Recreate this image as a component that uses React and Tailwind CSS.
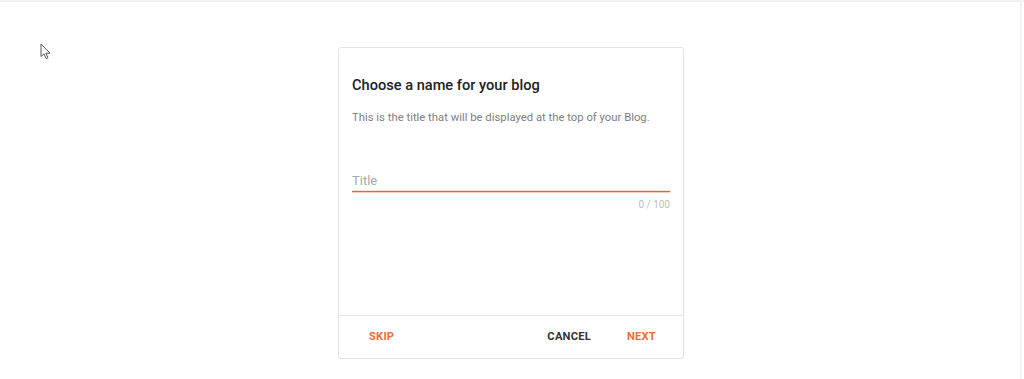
import React from "react";

export default function App() {
  return (
    <div className="relative h-[379px] w-[1024px] overflow-hidden bg-white" style={{ fontFamily: "Roboto, 'Liberation Sans', sans-serif" }}>
      <div className="absolute left-0 top-0 h-[2px] w-full bg-[#f1f1f1]" />
      <div className="absolute right-[2px] top-0 h-full w-[2px] bg-[#f3f3f3]" />
      <svg className="absolute left-[40px] top-[43px]" width="12" height="17" viewBox="0 0 12 17">
        <path d="M1 1 L1 13.5 L4 10.8 L6.2 15.6 L8 14.8 L5.9 10.2 L10 10.2 Z" fill="white" stroke="#555" strokeWidth="1" strokeLinejoin="round" />
      </svg>
      <div className="flex w-full justify-center pt-[47px]">
        <div className="ml-[-2px] flex h-[312px] w-[346px] flex-col rounded-[3px] border border-[#e2e2e2] bg-white">
          <div className="flex flex-1 flex-col px-[13px] pt-[27px]">
            <h1 className="text-[14.6px] font-medium leading-[20px] text-[#212121]">Choose a name for your blog</h1>
            <p className="mt-[15px] text-[11.3px] leading-[16px] text-[#808080]">This is the title that will be displayed at the top of your Blog.</p>
            <div className="mt-[47px] pb-[3px]">
              <span className="block text-[13px] leading-[15px] text-[#a8a8a8]">Title</span>
            </div>
            <div className="h-px w-full bg-[#e8662a] shadow-[0_1px_0_#f8cdb6,0_-1px_0_#fbe2d4]" />
            <div className="mt-[6px] text-right text-[10px] leading-[14px] text-[#bdbdbd]">0 / 100</div>
          </div>
          <div className="flex h-[43px] items-center border-t border-[#e4e4e4] pl-[30px] pr-[27px] text-[11.2px] font-bold tracking-[0.2px]">
            <span className="text-[#ec6c3c]">SKIP</span>
            <span className="ml-auto text-[#333333]">CANCEL</span>
            <span className="ml-[36px] text-[#ec6c3c]">NEXT</span>
          </div>
        </div>
      </div>
    </div>
  );
}
